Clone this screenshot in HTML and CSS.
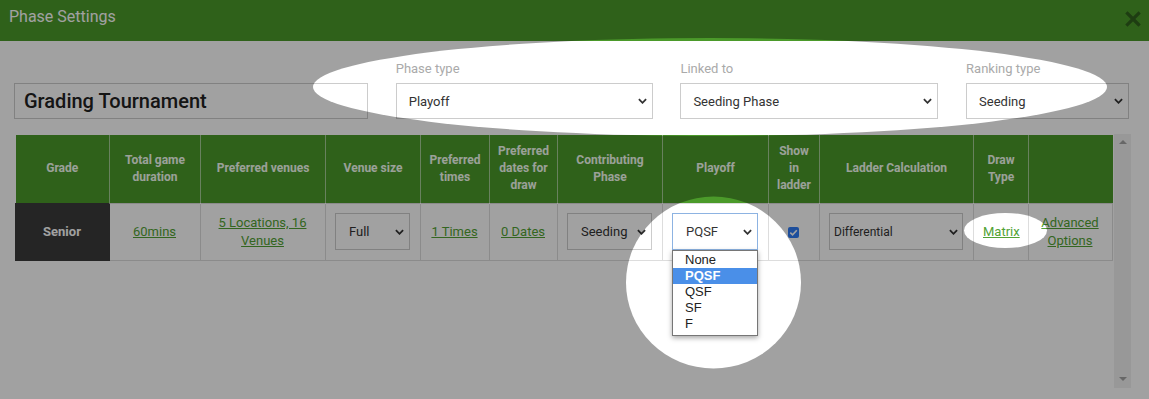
FILE: index.html
```html
<!DOCTYPE html>
<html lang="en">
<head>
<meta charset="utf-8">
<title>Phase Settings</title>
<link rel="stylesheet" href="styles.css">
</head>
<body>
<div class="modal">
  <header class="bar">
    <span class="title">Phase Settings</span>
    <svg class="close" viewBox="0 0 16 16" aria-label="Close"><path d="M2.5 2.5 L13.5 13.5 M13.5 2.5 L2.5 13.5"/></svg>
  </header>
  <main class="content">
    <div class="form-row">
      <div class="field"><div class="name-input">Grading Tournament</div></div>
      <div class="field">
        <label class="label">Phase type</label>
        <div class="select"><span>Playoff</span><svg class="chev" viewBox="0 0 10 6"><path d="M1 1 L5 5 L9 1"/></svg></div>
      </div>
      <div class="field">
        <label class="label">Linked to</label>
        <div class="select"><span>Seeding Phase</span><svg class="chev" viewBox="0 0 10 6"><path d="M1 1 L5 5 L9 1"/></svg></div>
      </div>
      <div class="field">
        <label class="label">Ranking type</label>
        <div class="select"><span>Seeding</span><svg class="chev" viewBox="0 0 10 6"><path d="M1 1 L5 5 L9 1"/></svg></div>
      </div>
    </div>

    <div class="table-wrap">
      <table class="grid">
        <colgroup>
          <col style="width:94px"><col style="width:91px"><col style="width:125px"><col style="width:95px">
          <col style="width:69px"><col style="width:68px"><col style="width:105px"><col style="width:106px">
          <col style="width:51px"><col style="width:154px"><col style="width:55px"><col style="width:84px">
        </colgroup>
        <thead>
          <tr>
            <th>Grade</th>
            <th>Total game duration</th>
            <th>Preferred venues</th>
            <th>Venue size</th>
            <th>Preferred times</th>
            <th>Preferred dates for draw</th>
            <th>Contributing Phase</th>
            <th>Playoff</th>
            <th>Show in ladder</th>
            <th>Ladder Calculation</th>
            <th>Draw Type</th>
            <th></th>
          </tr>
        </thead>
        <tbody>
          <tr>
            <td class="grade">Senior</td>
            <td><a class="link" href="#">60mins</a></td>
            <td><a class="link" href="#">5 Locations, 16 Venues</a></td>
            <td><div class="select sm"><span>Full</span><svg class="chev" viewBox="0 0 10 6"><path d="M1 1 L5 5 L9 1"/></svg></div></td>
            <td><a class="link" href="#">1 Times</a></td>
            <td><a class="link" href="#">0 Dates</a></td>
            <td><div class="select sm"><span>Seeding</span><svg class="chev" viewBox="0 0 10 6"><path d="M1 1 L5 5 L9 1"/></svg></div></td>
            <td>
              <div class="dd-wrap">
                <div class="select sm focus"><span>PQSF</span><svg class="chev" viewBox="0 0 10 6"><path d="M1 1 L5 5 L9 1"/></svg></div>
                <ul class="dropdown">
                  <li>None</li>
                  <li class="active">PQSF</li>
                  <li>QSF</li>
                  <li>SF</li>
                  <li>F</li>
                </ul>
              </div>
            </td>
            <td><span class="cb"><svg viewBox="0 0 12 12"><path d="M2.5 6.2 L5 8.6 L9.6 3.6"/></svg></span></td>
            <td><div class="select sm ladder"><span>Differential</span><svg class="chev" viewBox="0 0 10 6"><path d="M1 1 L5 5 L9 1"/></svg></div></td>
            <td><a class="link" href="#">Matrix</a></td>
            <td><a class="link" href="#">Advanced Options</a></td>
          </tr>
        </tbody>
      </table>
      <div class="scrollbar">
        <span class="arrow up"></span>
        <span class="arrow down"></span>
      </div>
    </div>
  </main>
</div>

<svg class="dim" viewBox="0 0 1149 399" preserveAspectRatio="none" aria-hidden="true">
  <defs>
    <mask id="holes" maskUnits="userSpaceOnUse" x="0" y="0" width="1149" height="399">
      <rect x="0" y="0" width="1149" height="399" fill="#fff"/>
      <ellipse cx="710" cy="87" rx="397" ry="49" fill="#000"/>
      <ellipse cx="713.5" cy="282.5" rx="87.5" ry="86" fill="#000"/>
      <ellipse cx="1005.5" cy="230.5" rx="41.5" ry="17.5" fill="#000"/>
    </mask>
  </defs>
  <rect x="0" y="0" width="1149" height="399" fill="#000" fill-opacity="0.37" mask="url(#holes)"/>
</svg>
</body>
</html>
```

FILE: styles.css
```css
* { box-sizing: border-box; margin: 0; padding: 0; }

html, body {
  width: 1149px;
  height: 399px;
  overflow: hidden;
}

body {
  font-family: Roboto, "Liberation Sans", Arial, sans-serif;
  background: #fff;
  color: #333;
}

.bar {
  height: 41px;
  background: #4b9a2a;
  display: flex;
  align-items: flex-start;
  justify-content: space-between;
  padding: 0 8px 0 9px;
}

.title {
  color: #fff;
  font-size: 16px;
  line-height: 33px;
}

.close {
  width: 16px;
  height: 16px;
  margin-top: 11px;
  fill: none;
  stroke: #30611d;
  stroke-width: 3.2;
  stroke-linecap: square;
}

.content {
  padding: 20px 19px 0 14px;
}

.form-row {
  display: grid;
  grid-template-columns: 354px 257px 258px 163px;
  column-gap: 27.7px;
  align-items: end;
}

.label {
  display: block;
  font-size: 13px;
  line-height: 16px;
  color: #aaa;
  margin-bottom: 6px;
}

.name-input {
  height: 36px;
  border: 1px solid #ccc;
  display: flex;
  align-items: center;
  padding-left: 9px;
  font-size: 20px;
  font-weight: 500;
  color: #222;
  background: #fff;
}

.select {
  height: 36px;
  border: 1px solid #ccc;
  background: #fff;
  display: flex;
  align-items: center;
  justify-content: space-between;
  padding: 0 5px 0 12px;
  font-size: 13px;
  color: #333;
  text-align: left;
}

.chev {
  width: 9px;
  height: 6px;
  fill: none;
  stroke: #333;
  stroke-width: 2;
  flex: none;
}

.table-wrap {
  margin-top: 16px;
  margin-left: 1px;
  height: 252px;
  display: flex;
  align-items: flex-start;
}

.grid {
  width: 1097px;
  table-layout: fixed;
  border-collapse: collapse;
  flex: none;
}

.grid th {
  height: 68px;
  background: #4b9a2a;
  color: #f6fff2;
  font-size: 12px;
  font-weight: 700;
  line-height: 17px;
  text-align: center;
  vertical-align: middle;
  padding: 0 6px;
}

.grid th + th {
  border-left: 1px solid rgba(255, 255, 255, 0.5);
}

.grid td {
  height: 57px;
  border: 1px solid #ddd;
  text-align: center;
  vertical-align: middle;
  font-size: 13px;
  line-height: 18px;
  padding: 0 10px 0 9px;
}

.grid td.grade {
  background: #3c3c3c;
  color: #fff;
  font-weight: 700;
  border-color: #3c3c3c;
}

.link {
  color: #52a234;
  text-decoration: underline;
}

.select.sm {
  height: 37px;
  padding: 0 5px 0 13px;
}

.select.ladder {
  font-size: 12px;
  padding: 0 4px 0 4px;
}

.select.focus {
  border-color: #8db3e2;
}

.dd-wrap {
  position: relative;
}

.dropdown {
  position: absolute;
  top: 100%;
  left: 0;
  width: 86px;
  list-style: none;
  background: #fff;
  border: 1px solid #767676;
  box-shadow: 0 2px 5px rgba(0, 0, 0, 0.35);
  padding: 1px 0 3px;
  font-family: "Liberation Sans", Arial, sans-serif;
  font-size: 13px;
  line-height: 16px;
  color: #222;
  text-align: left;
  z-index: 2;
}

.dropdown li {
  padding-left: 12px;
  height: 16px;
}

.dropdown li.active {
  background: #4a8fe8;
  color: #fff;
  font-weight: 700;
}

.cb {
  display: inline-block;
  width: 11px;
  height: 11px;
  border-radius: 2px;
  background: #2f7cf6;
  vertical-align: middle;
}

.cb svg {
  display: block;
  width: 11px;
  height: 11px;
  fill: none;
  stroke: #fff;
  stroke-width: 1.8;
}

.scrollbar {
  width: 17px;
  height: 254px;
  margin-left: 1px;
  margin-top: -1px;
  background: #f1f1f1;
  display: flex;
  flex-direction: column;
  justify-content: space-between;
  align-items: center;
  padding: 6px 0 7px;
  flex: none;
}

.arrow {
  width: 0;
  height: 0;
  border-left: 4px solid transparent;
  border-right: 4px solid transparent;
}

.arrow.up {
  border-bottom: 4px solid #a3a3a3;
}

.arrow.down {
  border-top: 4px solid #a3a3a3;
}

.dim {
  position: fixed;
  left: 0;
  top: 0;
  width: 1149px;
  height: 399px;
  pointer-events: none;
  z-index: 10;
}
```
